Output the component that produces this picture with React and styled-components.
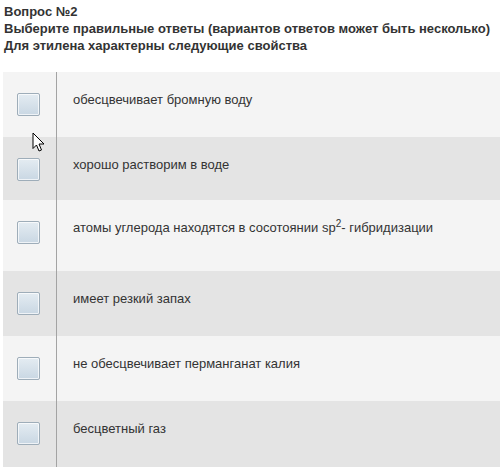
import React, { useState } from "react";
import styled, { createGlobalStyle } from "styled-components";

const GlobalStyle = createGlobalStyle`
  html, body {
    margin: 0;
    padding: 0;
    background: #ffffff;
  }
  body {
    font-family: Arial, "Liberation Sans", sans-serif;
    color: #333333;
    overflow: hidden;
  }
`;

const Page = styled.div`
  position: relative;
  width: 500px;
  height: 467px;
  overflow: hidden;
  padding: 3px 0 0 3px;
  box-sizing: border-box;
`;

const Header = styled.div`
  font-size: 13px;
  font-weight: bold;
  line-height: 17px;
  color: #333333;
  padding-left: 1px;
`;

const Table = styled.div`
  margin-top: 18px;
  display: flex;
  flex-direction: column;
`;

const Row = styled.label`
  display: grid;
  grid-template-columns: 54px 1fr;
  background: ${(p) => (p.$even ? "#e4e4e4" : "#f4f4f4")};
  min-height: ${(p) => p.$height}px;
  cursor: pointer;
`;

const BoxCell = styled.div`
  border-right: 1px solid #a3a3a3;
  display: flex;
  justify-content: center;
  padding-top: 21px;
`;

const Box = styled.span`
  width: 21px;
  height: 21px;
  border: 1px solid #9eadb9;
  border-radius: 2px;
  background: linear-gradient(#e4ecf2, #c9d7e3);
  box-shadow: inset 0 0 0 1px rgba(255, 255, 255, 0.7);
  position: relative;
  margin-left: -2px;
`;

const Tick = styled.span`
  position: absolute;
  left: 6px;
  top: 2px;
  width: 6px;
  height: 11px;
  border: solid #2f5d86;
  border-width: 0 3px 3px 0;
  transform: rotate(45deg);
`;

const TextCell = styled.div`
  font-size: 13px;
  line-height: 18px;
  padding: ${(p) => p.$top}px 10px 0 16px;
  color: #333333;
`;

const Sup = styled.sup`
  font-size: 10px;
  line-height: 0;
  vertical-align: 5px;
`;

const Cursor = styled.svg`
  position: absolute;
  left: 32px;
  top: 132px;
`;

const options = [
  { text: "обесцвечивает бромную воду", h: 65, top: 19 },
  { text: "хорошо растворим в воде", h: 63, top: 19 },
  { text: null, h: 71, top: 19 },
  { text: "имеет резкий запах", h: 65, top: 19 },
  { text: "не обесцвечивает перманганат калия", h: 65, top: 19 },
  { text: "бесцветный газ", h: 66, top: 19 },
];

export default function App() {
  const [checked, setChecked] = useState([]);

  const toggle = (i) =>
    setChecked((c) => (c.includes(i) ? c.filter((x) => x !== i) : [...c, i]));

  return (
    <Page>
      <GlobalStyle />
      <Header>
        Вопрос №2
        <br />
        Выберите правильные ответы (вариантов ответов может быть несколько)
        <br />
        Для этилена характерны следующие свойства
      </Header>
      <Table>
        {options.map((o, i) => (
          <Row
            key={i}
            $even={i % 2 === 1}
            $height={o.h}
            onClick={() => toggle(i)}
          >
            <BoxCell>
              <Box>{checked.includes(i) && <Tick />}</Box>
            </BoxCell>
            <TextCell $top={o.top}>
              {o.text || (
                <>
                  атомы углерода находятся в сосотоянии sp<Sup>2</Sup>- гибридизации
                </>
              )}
            </TextCell>
          </Row>
        ))}
      </Table>
      <Cursor width="14" height="21" viewBox="0 0 14 21">
        <path
          d="M1 1 L1 16.5 L4.5 13 L7 19 L9.5 18 L7 12 L12 12 Z"
          fill="#ffffff"
          stroke="#000000"
          strokeWidth="1"
          strokeLinejoin="round"
        />
      </Cursor>
    </Page>
  );
}
